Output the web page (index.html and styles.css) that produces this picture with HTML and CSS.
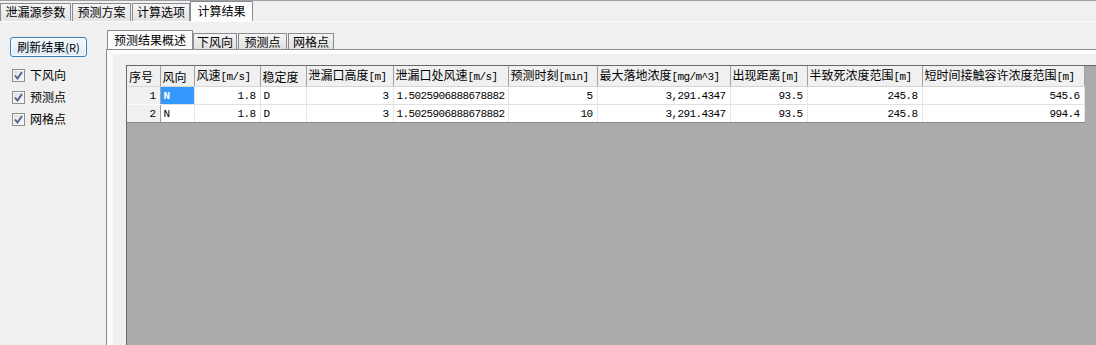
FILE: index.html
```html
<!DOCTYPE html>
<html lang="zh-CN">
<head>
    <meta charset="UTF-8">
    <title>计算结果</title>
    <link rel="stylesheet" href="styles.css">
</head>
<body>
    <!-- main tabs -->
    <div class="tabstrip">
        <div class="tab t1">泄漏源参数</div>
        <div class="tab t2">预测方案</div>
        <div class="tab t3">计算选项</div>
        <div class="tab active">计算结果</div>
    </div>

    <div class="frame">
        <div class="side">
            <button class="refresh">刷新结果<span class="key">(R)</span></button>
            <ul class="checks">
                <li><span class="box"><svg width="9" height="9" viewBox="0 0 9 9"><path d="M1 4.5 L3.5 7.5 L8 1" fill="none" stroke="#4b5f8c" stroke-width="1.8"/></svg></span>下风向</li>
                <li><span class="box"><svg width="9" height="9" viewBox="0 0 9 9"><path d="M1 4.5 L3.5 7.5 L8 1" fill="none" stroke="#4b5f8c" stroke-width="1.8"/></svg></span>预测点</li>
                <li><span class="box"><svg width="9" height="9" viewBox="0 0 9 9"><path d="M1 4.5 L3.5 7.5 L8 1" fill="none" stroke="#4b5f8c" stroke-width="1.8"/></svg></span>网格点</li>
            </ul>
        </div>

        <div class="results">
            <div class="subtabs">
                <div class="subtab active">预测结果概述</div>
                <div class="subtab s2">下风向</div>
                <div class="subtab s3">预测点</div>
                <div class="subtab s4">网格点</div>
            </div>
            <div class="subpanel">
                <div class="page">
                    <div class="grid">
                        <table>
                            <colgroup>
                                <col style="width:33px"><col style="width:34px"><col style="width:66px">
                                <col style="width:46px"><col style="width:87px"><col style="width:115px">
                                <col style="width:89px"><col style="width:133px"><col style="width:77px">
                                <col style="width:115px"><col style="width:162px">
                            </colgroup>
                            <tr>
                                <th>序号</th>
                                <th>风向</th>
                                <th>风速<span class="u">[m/s]</span></th>
                                <th>稳定度</th>
                                <th>泄漏口高度<span class="u">[m]</span></th>
                                <th>泄漏口处风速<span class="u">[m/s]</span></th>
                                <th>预测时刻<span class="u">[min]</span></th>
                                <th>最大落地浓度<span class="u">[mg/m^3]</span></th>
                                <th>出现距离<span class="u">[m]</span></th>
                                <th>半致死浓度范围<span class="u">[m]</span></th>
                                <th>短时间接触容许浓度范围<span class="u">[m]</span></th>
                            </tr>
                            <tr>
                                <td class="rh">1</td>
                                <td class="sel">N</td>
                                <td class="num">1.8</td>
                                <td>D</td>
                                <td class="num">3</td>
                                <td>1.5025906888678882</td>
                                <td class="num">5</td>
                                <td class="num">3,291.4347</td>
                                <td class="num">93.5</td>
                                <td class="num">245.8</td>
                                <td class="num">545.6</td>
                            </tr>
                            <tr class="last">
                                <td class="rh">2</td>
                                <td>N</td>
                                <td class="num">1.8</td>
                                <td>D</td>
                                <td class="num">3</td>
                                <td>1.5025906888678882</td>
                                <td class="num">10</td>
                                <td class="num">3,291.4347</td>
                                <td class="num">93.5</td>
                                <td class="num">245.8</td>
                                <td class="num">994.4</td>
                            </tr>
                        </table>
                    </div>
                </div>
            </div>
        </div>
    </div>
</body>
</html>
```

FILE: styles.css
```css
* {
    box-sizing: border-box;
}
body {
    margin: 0;
    height: 345px;
    overflow: hidden;
    background: #f0f0f0;
    font: 12px/16px "Noto Sans CJK SC", sans-serif;
    color: #000;
    border-top: 1px solid #a0a0a0;
    display: flex;
    flex-direction: column;
}

/* main tab strip */
.tabstrip {
    display: flex;
    align-items: flex-end;
    height: 20px;
    flex: none;
}
.tab {
    height: 18px;
    border: 1px solid #898c95;
    border-bottom: none;
    background: linear-gradient(#f4f4f4, #e3e3e3);
    text-align: center;
    line-height: 16px;
}
.t1 { width: 71px; }
.t2 { width: 59px; margin-left: 1px; }
.t3 { width: 58px; margin-left: 1px; }
.tab.active {
    width: 63px;
    height: 20px;
    margin-left: 0;
    background: #fcfcfc;
    line-height: 18px;
}
.frame {
    flex: 1;
    display: flex;
    min-height: 0;
    border-top: 1px solid #fcfcfc;
}

/* left panel */
.side {
    width: 106px;
    flex: none;
    padding: 15px 0 0 10px;
}
.refresh {
    width: 77px;
    height: 20px;
    padding: 0;
    border: 1px solid #3c7fb1;
    border-radius: 3px;
    background: linear-gradient(#f4f9fc, #dcecf7);
    box-shadow: inset 0 0 0 1px #fafdff;
    font: 12px/16px "Noto Sans CJK SC", sans-serif;
    color: #000;
}
.key {
    font-size: 11px;
}
.checks {
    list-style: none;
    margin: 7px 0 0;
    padding: 0 0 0 2px;
}
.checks li {
    height: 22px;
    display: flex;
    align-items: center;
}
.box {
    width: 13px;
    height: 13px;
    margin-right: 5px;
    border: 1px solid #8e8f8f;
    background: linear-gradient(135deg, #dcdcdc, #fbfbfb);
    box-shadow: inset 0 0 0 1px #f4f4f4;
    display: flex;
    align-items: center;
    justify-content: center;
}

/* result tabs */
.results {
    flex: 1;
    min-width: 0;
    display: flex;
    flex-direction: column;
    padding-top: 8px;
}
.subtabs {
    display: flex;
    align-items: flex-end;
    height: 19px;
    padding-left: 1px;
    flex: none;
}
.subtab {
    height: 16px;
    border: 1px solid #898c95;
    border-bottom: none;
    background: linear-gradient(#f4f4f4, #e0e0e0);
    text-align: center;
    line-height: 15px;
}
.subtab.active {
    width: 86px;
    height: 19px;
    background: #fcfcfc;
    line-height: 17px;
}
.s2 { width: 44px; }
.s3 { width: 49px; margin-left: 1px; }
.s4 { width: 46px; margin-left: 1px; }
.subpanel {
    flex: 1;
    display: flex;
    min-height: 0;
    border-top: 1px solid #898c95;
    border-left: 1px solid #898c95;
    background: #fcfcfc;
    padding: 4px 0 0 6px;
}
.page {
    flex: 1;
    display: flex;
    background: #f0f0f0;
    padding: 11px 0 0 13px;
}

/* data grid */
.grid {
    flex: 1;
    background: #ababab;
    border-top: 1px solid #696969;
    border-left: 1px solid #696969;
    overflow: hidden;
}
table {
    table-layout: fixed;
    border-collapse: collapse;
    width: 957px;
}
th, td {
    height: 18px;
    padding: 0 2px;
    white-space: nowrap;
    overflow: hidden;
}
th {
    background: #f0f0f0;
    border-right: 1px solid #a0a0a0;
    border-bottom: 1px solid #d5d5d5;
    font-weight: normal;
    text-align: left;
    line-height: 17px;
}
.u, td {
    font-family: "Liberation Mono", monospace;
    font-size: 11px;
    letter-spacing: -0.6px;
}
td {
    background: #fff;
    border-right: 1px solid #e6e6e6;
    border-bottom: 1px solid #e0e0e0;
    padding: 0 4px 0 3px;
}
td.num {
    text-align: right;
}
td.rh {
    background: #f0f0f0;
    border-right: 1px solid #a0a0a0;
    border-bottom: 1px solid #fcfcfc;
    text-align: right;
}
td.sel {
    background: #3399ff;
    color: #fff;
    font-weight: bold;
}
tr.last td {
    border-bottom: 1px solid #8a8a8a;
}
```
